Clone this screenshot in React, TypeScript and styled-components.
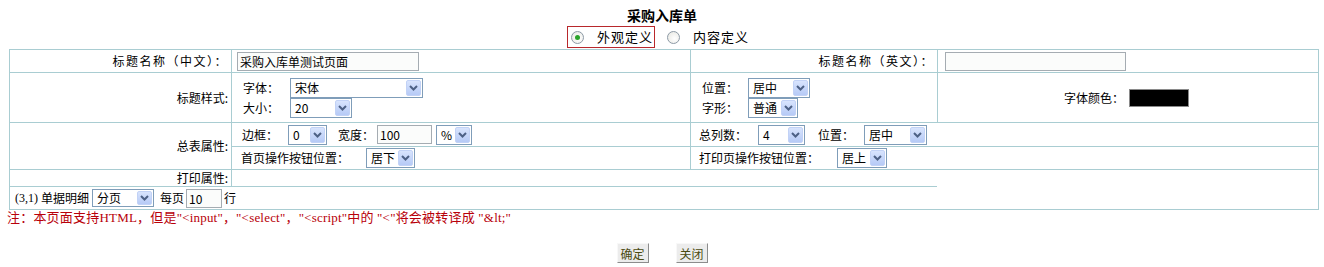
import React from 'react'
import styled, { createGlobalStyle } from 'styled-components'

const GlobalStyle = createGlobalStyle`
  body {
    margin: 0;
    background: #ffffff;
    font-family: "Noto Sans CJK SC", "DejaVu Sans", sans-serif;
    font-size: 12px;
    color: #000000;
  }
`

const lineColor = '#a9cdd2'

const Page = styled.div`
  width: 1324px;
`

const Header = styled.div`
  display: flex;
  flex-direction: column;
  align-items: center;
`

const Title = styled.div`
  margin-top: 7px;
  font-size: 14px;
  font-weight: bold;
  line-height: 17px;
`

const RadioRow = styled.div`
  display: flex;
  align-items: center;
  height: 22px;
  margin-top: 2px;
  padding-right: 6px;
`

const RadioOption = styled.div<{ $outlined?: boolean }>`
  display: flex;
  align-items: center;
  box-sizing: border-box;
  height: 22px;
  padding: 0 1px 0 ${(p) => (p.$outlined ? 3 : 0)}px;
  margin-right: ${(p) => (p.$outlined ? 11 : 0)}px;
  border: 1px solid ${(p) => (p.$outlined ? '#b8282c' : 'transparent')};
`

const RadioDot = styled.span<{ $checked?: boolean }>`
  position: relative;
  width: 13px;
  height: 13px;
  box-sizing: border-box;
  border-radius: 50%;
  border: 1px solid #8d9aa6;
  background: radial-gradient(circle at 60% 60%, #ffffff 0%, #e6e6e0 100%);
  margin-right: 13px;

  &::after {
    content: '';
    display: ${(p) => (p.$checked ? 'block' : 'none')};
    position: absolute;
    left: 3px;
    top: 3px;
    width: 5px;
    height: 5px;
    border-radius: 50%;
    background: #2aa32a;
  }
`

const RadioText = styled.span`
  font-size: 13px;
  letter-spacing: 1px;
  line-height: 16px;
`

const Table = styled.div`
  display: grid;
  box-sizing: border-box;
  width: 1310px;
  margin: 1px 0 0 9px;
  border: 1px solid ${lineColor};
  grid-template-columns: 221px 459px 247px 381px;
  grid-template-rows: 22px 50px 24px 23px 17px 23px;
`

const Cell = styled.div<{
  $col: string
  $row: string
  $top?: boolean
  $left?: boolean
  $align?: 'left' | 'right' | 'center'
  $pl?: number
}>`
  grid-column: ${(p) => p.$col};
  grid-row: ${(p) => p.$row};
  box-sizing: border-box;
  display: flex;
  flex-direction: column;
  justify-content: center;
  align-items: ${(p) =>
    p.$align === 'right' ? 'flex-end' : p.$align === 'center' ? 'center' : 'flex-start'};
  padding: 0 3px 0 ${(p) => p.$pl ?? 0}px;
  border-top: ${(p) => (p.$top ? `1px solid ${lineColor}` : 'none')};
  border-left: ${(p) => (p.$left ? `1px solid ${lineColor}` : 'none')};
  line-height: 14px;
  white-space: nowrap;
`

const WideText = styled.span`
  letter-spacing: 1.5px;
`

const FieldRow = styled.div`
  display: flex;
  align-items: center;
  height: 20px;
`

const Label = styled.span<{ $w?: number; $ml?: number }>`
  display: inline-block;
  width: ${(p) => (p.$w ? `${p.$w}px` : 'auto')};
  margin-left: ${(p) => p.$ml ?? 0}px;
  line-height: 14px;
`

const SelectBox = styled.div<{ $w: number; $h: number; $ml: number }>`
  display: flex;
  align-items: center;
  justify-content: space-between;
  box-sizing: border-box;
  width: ${(p) => p.$w}px;
  height: ${(p) => p.$h}px;
  margin-left: ${(p) => p.$ml}px;
  border: 1px solid #7f9db9;
  background: #ffffff;
  padding: 1px;
`

const SelectText = styled.span`
  padding-left: 3px;
  line-height: 14px;
`

const SelectArrow = styled.span`
  display: flex;
  align-items: center;
  justify-content: center;
  box-sizing: border-box;
  width: 15px;
  height: 100%;
  border: 1px solid #c2d2f6;
  border-radius: 2px;
  background: linear-gradient(#d8e4fd, #b6caf6);
`

function Select({
  value,
  w,
  h = 20,
  ml = 0,
}: {
  value: string
  w: number
  h?: number
  ml?: number
}) {
  return (
    <SelectBox $w={w} $h={h} $ml={ml}>
      <SelectText>{value}</SelectText>
      <SelectArrow>
        <svg width="9" height="6" viewBox="0 0 9 6">
          <path d="M1 1 L4.5 4.5 L8 1" fill="none" stroke="#4d6185" strokeWidth="2" />
        </svg>
      </SelectArrow>
    </SelectBox>
  )
}

const TextInput = styled.input<{ $w: number; $ml?: number }>`
  box-sizing: border-box;
  width: ${(p) => p.$w}px;
  height: 19px;
  margin: 0 0 0 ${(p) => p.$ml ?? 0}px;
  padding: 0 2px;
  border: 1px solid #a5acb2;
  background: #fbfcfb;
  font-family: inherit;
  font-size: 12px;
  color: #000000;
  outline: none;
`

const ColorSwatch = styled.span`
  display: inline-block;
  box-sizing: border-box;
  width: 60px;
  height: 18px;
  margin-left: 5px;
  background: #000000;
  border: 1px solid #8a8a8a;
`

const Numeric = styled.span`
  font-family: "Liberation Serif", serif;
  font-size: 12px;
  margin-right: 3px;
`

const Note = styled.div`
  margin: 1px 0 0 7px;
  font-family: "Liberation Serif", "Noto Sans CJK SC", serif;
  font-size: 13px;
  letter-spacing: 0.2px;
  line-height: 14px;
  color: #b8000a;
  white-space: nowrap;
`

const ButtonBar = styled.div`
  display: flex;
  justify-content: center;
  gap: 27px;
  margin-top: 18px;
`

const Button = styled.button`
  box-sizing: border-box;
  width: 32px;
  height: 20px;
  padding: 0;
  font-family: inherit;
  font-size: 12px;
  color: #4a4a10;
  background: #ececec;
  border: 1px solid;
  border-color: #f8f8f8 #8c8c8c #8c8c8c #f8f8f8;
`

export default function App() {
  return (
    <Page>
      <GlobalStyle />
      <Header>
        <Title>采购入库单</Title>
        <RadioRow>
          <RadioOption $outlined>
            <RadioDot $checked />
            <RadioText>外观定义</RadioText>
          </RadioOption>
          <RadioOption>
            <RadioDot />
            <RadioText>内容定义</RadioText>
          </RadioOption>
        </RadioRow>
      </Header>

      <Table>
        <Cell $col="1" $row="1" $align="right">
          <WideText>标题名称（中文）：</WideText>
        </Cell>
        <Cell $col="2" $row="1" $left $pl={5}>
          <TextInput $w={182} readOnly value="采购入库单测试页面" />
        </Cell>
        <Cell $col="3" $row="1" $left $align="right">
          <WideText>标题名称（英文）：</WideText>
        </Cell>
        <Cell $col="4" $row="1" $left $pl={7}>
          <TextInput $w={181} readOnly value="" />
        </Cell>

        <Cell $col="1" $row="2" $top $align="right">
          标题样式:
        </Cell>
        <Cell $col="2" $row="2" $top $left $pl={11}>
          <FieldRow>
            <Label $w={47}>字体：</Label>
            <Select value="宋体" w={133} />
          </FieldRow>
          <FieldRow>
            <Label $w={47}>大小：</Label>
            <Select value="20" w={62} />
          </FieldRow>
        </Cell>
        <Cell $col="3" $row="2" $top $left $pl={11}>
          <FieldRow>
            <Label $w={46}>位置：</Label>
            <Select value="居中" w={62} />
          </FieldRow>
          <FieldRow>
            <Label $w={46}>字形：</Label>
            <Select value="普通" w={50} />
          </FieldRow>
        </Cell>
        <Cell $col="4" $row="2" $top $left $align="center">
          <FieldRow>
            <Label>字体颜色：</Label>
            <ColorSwatch />
          </FieldRow>
        </Cell>

        <Cell $col="1" $row="3 / 5" $top $align="right">
          总表属性:
        </Cell>
        <Cell $col="2" $row="3" $top $left $pl={10}>
          <FieldRow>
            <Label $w={46}>边框：</Label>
            <Select value="0" w={39} />
            <Label $ml={11} $w={39}>
              宽度：
            </Label>
            <TextInput $w={55} readOnly value="100" />
            <Select value="%" w={36} ml={4} />
          </FieldRow>
        </Cell>
        <Cell $col="3 / 5" $row="3" $top $left $pl={8}>
          <FieldRow>
            <Label $w={59}>总列数：</Label>
            <Select value="4" w={47} />
            <Label $ml={13} $w={46}>
              位置：
            </Label>
            <Select value="居中" w={63} />
          </FieldRow>
        </Cell>
        <Cell $col="2" $row="4" $top $left $pl={9}>
          <FieldRow>
            <Label $w={125}>首页操作按钮位置：</Label>
            <Select value="居下" w={49} />
          </FieldRow>
        </Cell>
        <Cell $col="3 / 5" $row="4" $top $left $pl={8}>
          <FieldRow>
            <Label $w={138}>打印页操作按钮位置：</Label>
            <Select value="居上" w={50} />
          </FieldRow>
        </Cell>

        <Cell $col="1" $row="5" $top $align="right">
          打印属性:
        </Cell>
        <Cell $col="2 / 4" $row="5" $top $left />
        <Cell $col="4" $row="5 / 7" $top />

        <Cell $col="1 / 4" $row="6" $top $pl={5}>
          <FieldRow>
            <Numeric>(3,1)</Numeric>
            <Label>单据明细</Label>
            <Select value="分页" w={62} h={18} ml={3} />
            <Label $ml={6}>每页</Label>
            <TextInput $w={36} $ml={2} readOnly value="10" />
            <Label $ml={2}>行</Label>
          </FieldRow>
        </Cell>
      </Table>

      <Note>
        注：本页面支持HTML，但是"&lt;input"，"&lt;select"，"&lt;script"中的 "&lt;"将会被转译成 "&amp;lt;"
      </Note>

      <ButtonBar>
        <Button>确定</Button>
        <Button>关闭</Button>
      </ButtonBar>
    </Page>
  )
}
